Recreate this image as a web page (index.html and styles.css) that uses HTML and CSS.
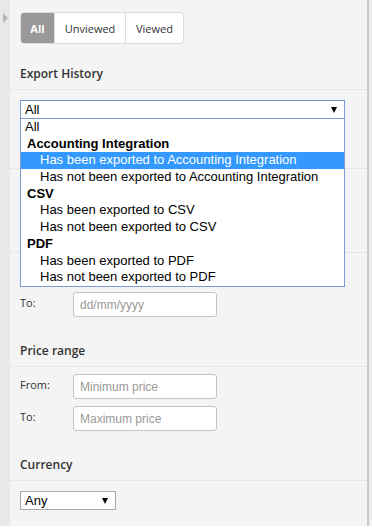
FILE: index.html
```html
<!DOCTYPE html>
<html lang="en">
<head>
    <meta charset="UTF-8">
    <meta name="viewport" content="width=device-width, initial-scale=1.0">
    <title>Filters</title>
    <link rel="stylesheet" href="styles.css">
</head>
<body>
<div class="page">
    <div class="rail"><span class="rail-arrow"></span></div>

    <div class="panel">
        <div class="tabs-wrap">
            <div class="tabs">
                <span class="tab tab-all active">All</span>
                <span class="tab tab-unviewed">Unviewed</span>
                <span class="tab tab-viewed">Viewed</span>
            </div>
        </div>

        <div class="section">
            <div class="section-title">Export History</div>
            <div class="section-body">
                <div class="dropdown">
                    <div class="select select-wide focused">All<span class="caret"></span></div>
                    <ul class="options">
                        <li class="opt">All</li>
                        <li class="group">Accounting Integration</li>
                        <li class="opt sub selected">Has been exported to Accounting Integration</li>
                        <li class="opt sub">Has not been exported to Accounting Integration</li>
                        <li class="group">CSV</li>
                        <li class="opt sub">Has been exported to CSV</li>
                        <li class="opt sub">Has not been exported to CSV</li>
                        <li class="group">PDF</li>
                        <li class="opt sub">Has been exported to PDF</li>
                        <li class="opt sub">Has not been exported to PDF</li>
                    </ul>
                </div>
            </div>
        </div>

        <!-- these two blocks sit under the open list -->
        <div class="section covered">
            <div class="section-title"><span>Status</span></div>
            <div class="section-body">
                <div class="select select-wide tall">All<span class="caret"></span></div>
            </div>
        </div>

        <div class="section">
            <div class="section-title covered"><span>Date range</span></div>
            <div class="section-body fields">
                <div class="field covered">
                    <label>From:</label>
                    <input type="text" placeholder="dd/mm/yyyy">
                </div>
                <div class="field">
                    <label>To:</label>
                    <input type="text" placeholder="dd/mm/yyyy">
                </div>
            </div>
        </div>

        <div class="section">
            <div class="section-title">Price range</div>
            <div class="section-body fields">
                <div class="field">
                    <label>From:</label>
                    <input type="text" placeholder="Minimum price">
                </div>
                <div class="field">
                    <label>To:</label>
                    <input type="text" placeholder="Maximum price">
                </div>
            </div>
        </div>

        <div class="section">
            <div class="section-title">Currency</div>
            <div class="section-body">
                <div class="select select-small">Any<span class="caret"></span></div>
            </div>
        </div>
    </div>

    <div class="scrollbar"></div>
</div>
</body>
</html>
```

FILE: styles.css
```css
body {
    margin: 0;
    background: #fff;
    font-family: "Open Sans", Arial, sans-serif;
    color: #333;
}
.page {
    display: flex;
    height: 526px;
    overflow: hidden;
}
.rail {
    width: 10px;
    background: #e8e8e8;
    position: relative;
}
.rail-arrow {
    position: absolute;
    left: 3px;
    top: 13px;
    width: 0;
    height: 0;
    border-top: 5px solid transparent;
    border-bottom: 5px solid transparent;
    border-left: 5px solid #b4b4b4;
}
.panel {
    width: 357px;
    background: #f4f4f4;
}
.scrollbar {
    width: 3px;
    border-left: 2px solid #c8c8c8;
    background: #efefef;
}

/* tabs */
.tabs-wrap {
    padding: 12px 10px 9px;
}
.tabs {
    display: inline-flex;
    height: 32px;
    border: 1px solid #dcdcdc;
    border-radius: 4px;
    background: #fff;
    overflow: hidden;
    box-sizing: border-box;
}
.tab {
    display: flex;
    align-items: center;
    justify-content: center;
    font-size: 11px;
    color: #333;
    border-left: 1px solid #dcdcdc;
}
.tab-all {
    width: 33px;
    border-left: none;
}
.tab-unviewed {
    width: 70px;
}
.tab-viewed {
    width: 57px;
}
.tab.active {
    background: #999;
    color: #fff;
    font-weight: 700;
}

/* sections */
.section-title {
    padding: 13px 10px 7px;
    height: 16px;
    line-height: 16px;
    font-size: 12px;
    font-weight: 600;
    color: #333;
    border-bottom: 1px solid #e6e6e6;
}
.section-body {
    padding: 7px 22px 13px 10px;
}
/* hidden behind the open dropdown, only the lines show */
.covered .section-title span,
.section-title.covered span,
.covered .select,
.field.covered {
    visibility: hidden;
}

/* fake selects */
.select {
    position: relative;
    box-sizing: border-box;
    height: 19px;
    margin-top: 3px;
    padding-left: 4px;
    background: #fff;
    border: 1px solid #a9a9a9;
    font-family: "Liberation Sans", Arial, sans-serif;
    font-size: 13px;
    line-height: 17px;
    color: #000;
}
.select.tall {
    margin-bottom: 5px;
}
.select-small {
    width: 96px;
}
.select.focused {
    border-color: #7a9bd2;
}
.caret {
    position: absolute;
    right: 7px;
    top: 6px;
    width: 0;
    height: 0;
    border-left: 3.5px solid transparent;
    border-right: 3.5px solid transparent;
    border-top: 6px solid #000;
}
.dropdown {
    position: relative;
}
.options {
    position: absolute;
    top: 100%;
    left: 0;
    right: 0;
    margin: 0;
    padding: 0;
    list-style: none;
    background: #fff;
    border: 1px solid #7a9bd2;
    border-top: none;
    z-index: 5;
    font-family: "Liberation Sans", Arial, sans-serif;
    font-size: 13px;
    color: #000;
}
.options li {
    height: 16.7px;
    line-height: 16px;
    white-space: nowrap;
}
.opt {
    padding-left: 4px;
}
.group {
    padding-left: 6px;
    font-weight: 700;
}
.opt.sub {
    padding-left: 19px;
}
.opt.selected {
    background: #3399ff;
    color: #fff;
}

/* labelled inputs */
.fields {
    display: flex;
    flex-direction: column;
    gap: 7px;
}
.field {
    display: flex;
    align-items: flex-start;
}
.field label {
    width: 53px;
    padding-top: 3px;
    font-size: 11px;
    line-height: 16px;
    color: #333;
}
.field input {
    box-sizing: border-box;
    width: 144px;
    height: 25px;
    margin: 0;
    padding: 0 6px;
    border: 1px solid #c4c4c4;
    border-radius: 3px;
    background: #fff;
    font-family: "Liberation Sans", Arial, sans-serif;
    font-size: 12px;
}
.field input::placeholder {
    color: #999;
}
```
